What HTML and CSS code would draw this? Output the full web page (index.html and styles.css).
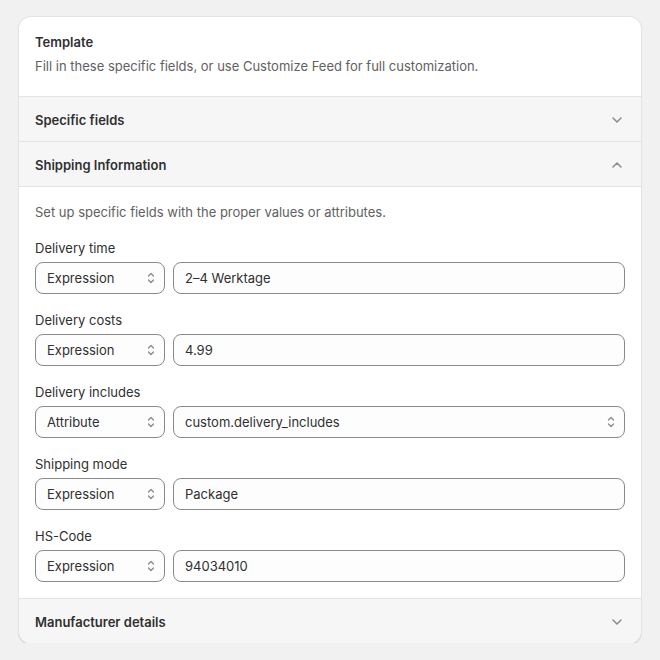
FILE: index.html
```html
<!DOCTYPE html>
<html>
<head>
<meta charset="utf-8">
<link rel="stylesheet" href="styles.css">
</head>
<body>
<div class="card">
  <div class="head">
    <div class="title">Template</div>
    <div class="sub">Fill in these specific fields, or use Customize Feed for full customization.</div>
  </div>
  <div class="acc">
    <span>Specific fields</span>
    <svg class="chev" viewBox="0 0 20 20"><path d="M6 8l4 4 4-4"/></svg>
  </div>
  <div class="acc">
    <span>Shipping Information</span>
    <svg class="chev" viewBox="0 0 20 20"><path d="M6 12l4-4 4 4"/></svg>
  </div>
  <div class="body">
    <div class="intro">Set up specific fields with the proper values or attributes.</div>
    <div class="field">
      <div class="label">Delivery time</div>
      <div class="row">
        <div class="select">Expression<svg class="upd" viewBox="0 0 20 20"><path d="M7.5 8l2.5-2.5 2.5 2.5M7.5 12l2.5 2.5 2.5-2.5"/></svg></div>
        <div class="input">2–4 Werktage</div>
      </div>
    </div>
    <div class="field">
      <div class="label">Delivery costs</div>
      <div class="row">
        <div class="select">Expression<svg class="upd" viewBox="0 0 20 20"><path d="M7.5 8l2.5-2.5 2.5 2.5M7.5 12l2.5 2.5 2.5-2.5"/></svg></div>
        <div class="input">4.99</div>
      </div>
    </div>
    <div class="field">
      <div class="label">Delivery includes</div>
      <div class="row">
        <div class="select">Attribute<svg class="upd" viewBox="0 0 20 20"><path d="M7.5 8l2.5-2.5 2.5 2.5M7.5 12l2.5 2.5 2.5-2.5"/></svg></div>
        <div class="input select-wide">custom.delivery_includes<svg class="upd" viewBox="0 0 20 20"><path d="M7.5 8l2.5-2.5 2.5 2.5M7.5 12l2.5 2.5 2.5-2.5"/></svg></div>
      </div>
    </div>
    <div class="field">
      <div class="label">Shipping mode</div>
      <div class="row">
        <div class="select">Expression<svg class="upd" viewBox="0 0 20 20"><path d="M7.5 8l2.5-2.5 2.5 2.5M7.5 12l2.5 2.5 2.5-2.5"/></svg></div>
        <div class="input">Package</div>
      </div>
    </div>
    <div class="field">
      <div class="label">HS-Code</div>
      <div class="row">
        <div class="select">Expression<svg class="upd" viewBox="0 0 20 20"><path d="M7.5 8l2.5-2.5 2.5 2.5M7.5 12l2.5 2.5 2.5-2.5"/></svg></div>
        <div class="input">94034010</div>
      </div>
    </div>
  </div>
  <div class="acc last">
    <span>Manufacturer details</span>
    <svg class="chev" viewBox="0 0 20 20"><path d="M6 8l4 4 4-4"/></svg>
  </div>
</div>
</body>
</html>
```

FILE: styles.css
```css
* { box-sizing: border-box; }
html, body { margin: 0; background: #f1f1f1; }
body {
  padding: 17px 19px 0 19px;
  font-family: Inter, "Noto Sans", sans-serif;
  font-size: 13px;
  line-height: 20px;
  color: #303030;
}
.card {
  background: #fff;
  border-radius: 12px;
  box-shadow: 0 0 0 1px #e3e3e3, 0 1px 0 1px #d4d4d4;
  overflow: hidden;
}
.head {
  padding: 15px 16px 20px;
  border-bottom: 1px solid #e3e3e3;
}
.title { font-weight: 600; }
.sub { margin-top: 4px; color: #616161; }
.acc {
  display: flex;
  align-items: center;
  justify-content: space-between;
  height: 45px;
  padding: 1px 16px 0;
  background: #f6f6f6;
  font-weight: 600;
  border-bottom: 1px solid #e3e3e3;
}
.acc.last { border-bottom: 0; height: 44px; }
.chev {
  width: 20px; height: 20px;
  fill: none; stroke: #8a8a8a; stroke-width: 1.5;
  stroke-linecap: round; stroke-linejoin: round;
  margin-right: -2px;
}
.body {
  padding: 15px 16px 16px;
  border-bottom: 1px solid #e3e3e3;
}
.intro { color: #616161; margin-bottom: 16px; }
.field + .field { margin-top: 16px; }
.label { margin-bottom: 4px; }
.row { display: flex; gap: 8px; }
.select, .input {
  height: 32px;
  border: 1px solid #8a8a8a;
  border-radius: 8px;
  background: #fdfdfd;
  display: flex;
  align-items: center;
  padding: 0 11px;
}
.select {
  width: 130px;
  flex: none;
  justify-content: space-between;
  padding-right: 3px;
}
.input { flex: 1; }
.select-wide { justify-content: space-between; padding-right: 3px; }
.upd {
  width: 20px; height: 20px;
  fill: none; stroke: #8a8a8a; stroke-width: 1.3;
  stroke-linecap: round; stroke-linejoin: round;
}
```
